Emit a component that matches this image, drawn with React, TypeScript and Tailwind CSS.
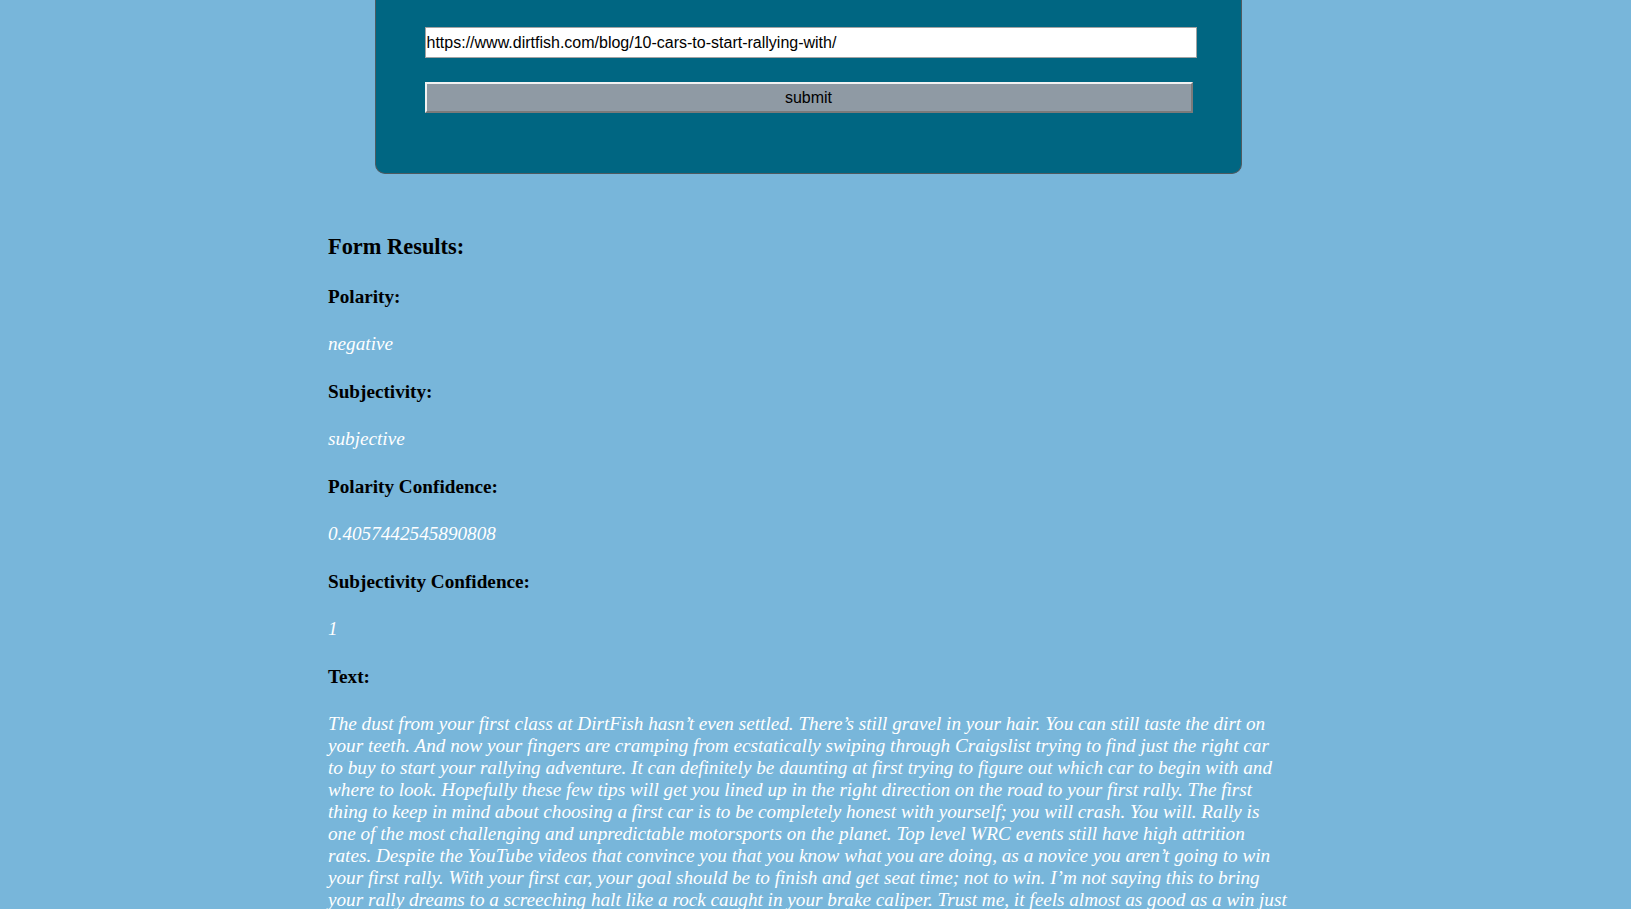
import React from "react";

type ResultItem = {
  label: string;
  value: string;
};

const results: ResultItem[] = [
  { label: "Polarity:", value: "negative" },
  { label: "Subjectivity:", value: "subjective" },
  { label: "Polarity Confidence:", value: "0.4057442545890808" },
  { label: "Subjectivity Confidence:", value: "1" },
];

const articleText =
  "The dust from your first class at DirtFish hasn’t even settled. There’s still gravel in your hair. You can still taste the dirt on your teeth. And now your fingers are cramping from ecstatically swiping through Craigslist trying to find just the right car to buy to start your rallying adventure. It can definitely be daunting at first trying to figure out which car to begin with and where to look. Hopefully these few tips will get you lined up in the right direction on the road to your first rally. The first thing to keep in mind about choosing a first car is to be completely honest with yourself; you will crash. You will. Rally is one of the most challenging and unpredictable motorsports on the planet. Top level WRC events still have high attrition rates. Despite the YouTube videos that convince you that you know what you are doing, as a novice you aren’t going to win your first rally. With your first car, your goal should be to finish and get seat time; not to win. I’m not saying this to bring your rally dreams to a screeching halt like a rock caught in your brake caliper. Trust me, it feels almost as good as a win just to cross the finish line of your first event. So when you are looking for that first car, keep in mind that it will get dented, scratched and bent along the way.";

const App: React.FC = () => {
  return (
    <div className="min-h-screen bg-[#78b6da] pr-[15px] pb-10">
      <div className="mx-auto w-[867px] rounded-b-[10px] border border-t-0 border-[#4f5a60] bg-[#006682] pt-[27px] pb-[60px] pl-[49px] pr-[44px]">
        <form className="flex flex-col" onSubmit={(e) => e.preventDefault()}>
          <input
            type="text"
            defaultValue="https://www.dirtfish.com/blog/10-cars-to-start-rallying-with/"
            className="h-[31px] w-[772px] border border-[#a3a3a3] bg-white px-[1px] font-['Liberation_Sans',Arial,sans-serif] text-[16px] text-black outline-none"
          />
          <button
            type="submit"
            className="mt-[24px] h-[31px] w-[768px] border-2 border-t-[#f2f2f2] border-l-[#f2f2f2] border-r-[#7a7a7a] border-b-[#7a7a7a] bg-[#8f9aa4] font-['Liberation_Sans',Arial,sans-serif] text-[16px] text-black"
          >
            submit
          </button>
        </form>
      </div>

      <div className="mx-auto mt-[60px] w-[960px] font-['Liberation_Serif','Times_New_Roman',serif] text-[19.2px] leading-[22px]">
        <h3 className="text-[22.4px] leading-[26px] font-bold text-black">Form Results:</h3>
        {results.map((item, index) => (
          <div key={index}>
            <h4 className="mt-[25.5px] font-bold text-black">{item.label}</h4>
            <p className="mt-[25.5px] italic text-white">{item.value}</p>
          </div>
        ))}
        <h4 className="mt-[25.5px] font-bold text-black">Text:</h4>
        <p className="mt-[25.5px] italic text-white">{articleText}</p>
      </div>
    </div>
  );
};

export default App;
